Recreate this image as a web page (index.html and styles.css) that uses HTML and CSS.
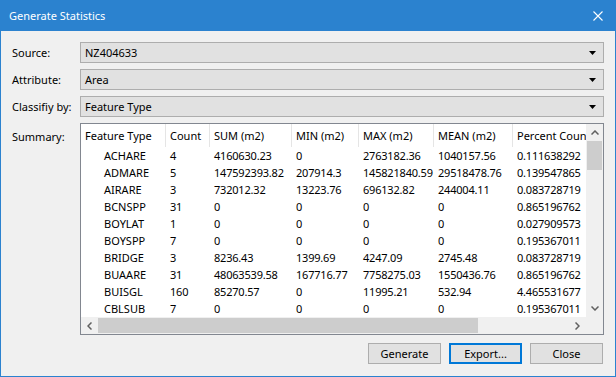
FILE: index.html
```html
<html lang="en">
<head>
    <meta charset="UTF-8">
    <title>Generate Statistics</title>
    <link rel="stylesheet" href="styles.css">
</head>
<body>

<div class="window">
    <div class="titlebar">
        <span class="title">Generate Statistics</span>
        <span class="close">
            <svg width="10" height="10" viewBox="0 0 10 10"><path d="M0.5 0.5 L9.5 9.5 M9.5 0.5 L0.5 9.5" stroke="#fff" stroke-width="1.1" fill="none"/></svg>
        </span>
    </div>

    <div class="client">
        <div class="field">
            <label>Source:</label>
            <div class="combo"><span>NZ404633</span><svg class="arrow" width="7" height="4" viewBox="0 0 7 4"><polygon points="0,0 7,0 3.5,4" fill="#000"/></svg></div>
        </div>
        <div class="field">
            <label>Attribute:</label>
            <div class="combo"><span>Area</span><svg class="arrow" width="7" height="4" viewBox="0 0 7 4"><polygon points="0,0 7,0 3.5,4" fill="#000"/></svg></div>
        </div>
        <div class="field">
            <label>Classifiy by:</label>
            <div class="combo"><span>Feature Type</span><svg class="arrow" width="7" height="4" viewBox="0 0 7 4"><polygon points="0,0 7,0 3.5,4" fill="#000"/></svg></div>
        </div>

        <div class="field summary">
            <label>Summary:</label>
            <div class="list">
                <div class="view">
                    <div class="row head">
                        <div>Feature Type</div><div>Count</div><div>SUM (m2)</div><div>MIN (m2)</div><div>MAX (m2)</div><div>MEAN (m2)</div><div>Percent Count</div>
                    </div>
                    <div class="row"><div class="name">ACHARE</div><div>4</div><div>4160630.23</div><div>0</div><div>2763182.36</div><div>1040157.56</div><div>0.111638292</div></div>
                    <div class="row"><div class="name">ADMARE</div><div>5</div><div>147592393.82</div><div>207914.3</div><div>145821840.59</div><div>29518478.76</div><div>0.139547865</div></div>
                    <div class="row"><div class="name">AIRARE</div><div>3</div><div>732012.32</div><div>13223.76</div><div>696132.82</div><div>244004.11</div><div>0.083728719</div></div>
                    <div class="row"><div class="name">BCNSPP</div><div>31</div><div>0</div><div>0</div><div>0</div><div>0</div><div>0.865196762</div></div>
                    <div class="row"><div class="name">BOYLAT</div><div>1</div><div>0</div><div>0</div><div>0</div><div>0</div><div>0.027909573</div></div>
                    <div class="row"><div class="name">BOYSPP</div><div>7</div><div>0</div><div>0</div><div>0</div><div>0</div><div>0.195367011</div></div>
                    <div class="row"><div class="name">BRIDGE</div><div>3</div><div>8236.43</div><div>1399.69</div><div>4247.09</div><div>2745.48</div><div>0.083728719</div></div>
                    <div class="row"><div class="name">BUAARE</div><div>31</div><div>48063539.58</div><div>167716.77</div><div>7758275.03</div><div>1550436.76</div><div>0.865196762</div></div>
                    <div class="row"><div class="name">BUISGL</div><div>160</div><div>85270.57</div><div>0</div><div>11995.21</div><div>532.94</div><div>4.465531677</div></div>
                    <div class="row"><div class="name">CBLSUB</div><div>7</div><div>0</div><div>0</div><div>0</div><div>0</div><div>0.195367011</div></div>
                </div>

                <div class="vscroll">
                    <div class="sb-btn"><svg width="8" height="5" viewBox="0 0 8 5"><polyline points="0.5,4.5 4,1 7.5,4.5" stroke="#606060" stroke-width="1.5" fill="none"/></svg></div>
                    <div class="vthumb"></div>
                    <div class="track"></div>
                    <div class="sb-btn"><svg width="8" height="5" viewBox="0 0 8 5"><polyline points="0.5,0.5 4,4 7.5,0.5" stroke="#606060" stroke-width="1.5" fill="none"/></svg></div>
                </div>

                <div class="hscroll">
                    <div class="sb-btn"><svg width="5" height="8" viewBox="0 0 5 8"><polyline points="4.5,0.5 1,4 4.5,7.5" stroke="#606060" stroke-width="1.5" fill="none"/></svg></div>
                    <div class="hthumb"></div>
                    <div class="track"></div>
                    <div class="sb-btn"><svg width="5" height="8" viewBox="0 0 5 8"><polyline points="0.5,0.5 4,4 0.5,7.5" stroke="#606060" stroke-width="1.5" fill="none"/></svg></div>
                </div>

                <div class="corner"></div>
            </div>
        </div>

        <div class="buttons">
            <button>Generate</button>
            <button class="default">Export...</button>
            <button>Close</button>
        </div>
    </div>
</div>

</body>
</html>
```

FILE: styles.css
```css
body {
    margin: 0;
    font-family: "Noto Sans", sans-serif;
    font-size: 11px;
    line-height: 15px;
    color: #000;
    background: #f0f0f0;
}
.window {
    width: 616px;
    height: 377px;
    box-sizing: border-box;
    border: 1px solid #2b82cf;
    border-top: none;
    display: flex;
    flex-direction: column;
    background: #f0f0f0;
}
.titlebar {
    height: 31px;
    flex: none;
    background: #2b82cf;
    color: #fff;
    display: flex;
    align-items: center;
    justify-content: space-between;
    padding-left: 8px;
}
.close {
    width: 34px;
    height: 31px;
    display: flex;
    align-items: center;
    justify-content: center;
}
.client {
    flex: 1;
    display: flex;
    flex-direction: column;
    gap: 6px;
    padding: 11px 11px 12px 11px;
}
.field {
    display: flex;
    align-items: center;
}
.field label {
    width: 68px;
    flex: none;
}
.combo {
    flex: 1;
    height: 21px;
    box-sizing: border-box;
    border: 1px solid #adadad;
    background: #e1e1e1;
    display: flex;
    align-items: center;
    justify-content: space-between;
    padding: 0 7px 0 4px;
}
.summary {
    flex: 1;
    align-items: stretch;
}
.summary label {
    padding-top: 6px;
}
.list {
    flex: 1;
    border: 1px solid #828790;
    background: #fff;
    display: grid;
    grid-template-columns: 1fr 17px;
    grid-template-rows: 1fr 17px;
    min-width: 0;
}
.view {
    overflow: hidden;
    min-width: 0;
}
.row {
    display: grid;
    grid-template-columns: 85px 44px 82px 67px 75px 79px 110px;
    width: 542px;
    height: 17px;
    line-height: 17px;
}
.row div {
    padding-left: 4px;
    white-space: nowrap;
    overflow: hidden;
    letter-spacing: -0.2px;
}
.row div.name {
    padding-left: 23px;
    letter-spacing: 0;
}
.row.head {
    height: 23px;
    line-height: 23px;
}
.row.head div {
    border-right: 1px solid #e5e5e5;
    letter-spacing: 0;
}
.vscroll {
    background: #f0f0f0;
    display: flex;
    flex-direction: column;
}
.hscroll {
    background: #f0f0f0;
    display: flex;
}
.sb-btn {
    width: 17px;
    height: 17px;
    flex: none;
    display: flex;
    align-items: center;
    justify-content: center;
}
.track {
    flex: 1;
}
.vthumb {
    height: 29px;
    margin: 0 1px;
    background: #cdcdcd;
}
.hthumb {
    width: 380px;
    margin: 1px 0;
    background: #cdcdcd;
}
.corner {
    background: #f0f0f0;
}
.buttons {
    display: flex;
    justify-content: flex-end;
    gap: 8px;
    margin-top: 2px;
    padding-right: 1px;
}
.buttons button {
    width: 73px;
    height: 21px;
    box-sizing: border-box;
    padding: 0;
    background: #e1e1e1;
    border: 1px solid #adadad;
    font-family: inherit;
    font-size: 11px;
    color: #000;
}
.buttons button.default {
    border: 2px solid #0078d7;
}
```
